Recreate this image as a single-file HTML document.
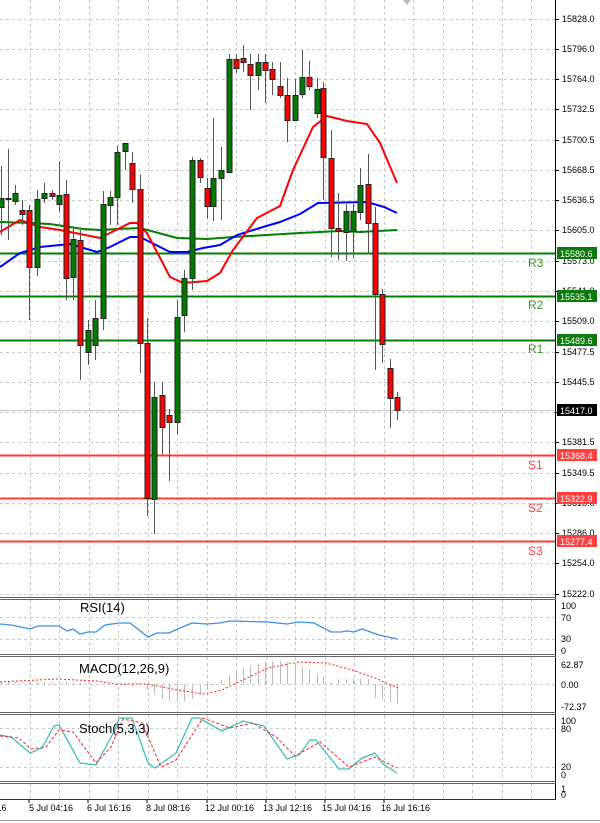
<!DOCTYPE html>
<html><head><meta charset="utf-8"><style>
html,body{margin:0;padding:0;background:#fff;}
svg{display:block;font-family:"Liberation Sans",sans-serif;}
</style></head><body>
<svg id="s" width="600" height="823" viewBox="0 0 600 823" xmlns="http://www.w3.org/2000/svg">
<rect width="600" height="823" fill="#fff"/>
<g id="grid"></g>
<g id="levels">
<line x1="0" y1="253.5" x2="556" y2="253.5" stroke="#008000" stroke-width="2"/>
<line x1="0" y1="296.5" x2="556" y2="296.5" stroke="#008000" stroke-width="2"/>
<line x1="0" y1="340.5" x2="556" y2="340.5" stroke="#008000" stroke-width="2"/>
<line x1="0" y1="410.5" x2="556" y2="410.5" stroke="#c8c8c8" stroke-width="1"/>
<line x1="0" y1="455.5" x2="556" y2="455.5" stroke="#ff3b30" stroke-width="2"/>
<line x1="0" y1="498.5" x2="556" y2="498.5" stroke="#ff3b30" stroke-width="2"/>
<line x1="0" y1="541.5" x2="556" y2="541.5" stroke="#ff3b30" stroke-width="2"/>
</g>
<g id="ma" fill="none" stroke-width="2">
<polyline stroke="#008000" points="0,222 30,223 50,224 83,229 100,230 117,229 140,228 177,238 207,239 233,237 300,233 340,231 360,232 397,230"/>
<polyline stroke="#0000ff" points="0,267 20,253 40,247 70,244 80,247 97,252 110,247 130,237 140,237 170,252 187,252 203,248 220,245 237,235 263,227 280,222 300,214 318,203 367,202 384,207 397,213"/>
<polyline stroke="#ff0000" points="0,232 20,220 40,227 60,230 100,238 130,223 137,223 147,233 170,277 183,283 207,281 220,273 233,250 257,218 280,206 293,170 313,127 327,116 347,121 367,124 380,143 397,183"/>
</g>
<g id="candles"></g>
<g font-size="12" fill="#2e8b57">
<text x="528" y="267" fill="#3a9a20">R3</text>
<text x="528" y="309" fill="#3a9a20">R2</text>
<text x="528" y="353" fill="#3a9a20">R1</text>
<text x="528" y="469" fill="#ff4040">S1</text>
<text x="528" y="512" fill="#ff4040">S2</text>
<text x="528" y="555" fill="#ff4040">S3</text>
</g>
<polygon points="403,0 411,0 407,5" fill="#bbb"/>
<!-- axis -->
<line x1="555.5" y1="0" x2="555.5" y2="800" stroke="#000" stroke-width="1"/>
<g font-size="9" fill="#000">
<text x="562" y="22">15828.0</text>
<text x="562" y="52">15796.0</text>
<text x="562" y="82">15764.0</text>
<text x="562" y="112">15732.5</text>
<text x="562" y="143">15700.5</text>
<text x="562" y="173">15668.5</text>
<text x="562" y="203">15636.5</text>
<text x="562" y="233">15605.0</text>
<text x="562" y="264">15573.0</text>
<text x="562" y="294">15541.0</text>
<text x="562" y="324">15509.0</text>
<text x="562" y="355">15477.5</text>
<text x="562" y="385">15445.5</text>
<text x="562" y="415">15413.5</text>
<text x="562" y="445">15381.5</text>
<text x="562" y="476">15349.5</text>
<text x="562" y="506">15318.0</text>
<text x="562" y="536">15286.0</text>
<text x="562" y="566">15254.0</text>
<text x="562" y="597">15222.0</text>
</g>
<g font-size="9" fill="#fff">
<rect x="557" y="247" width="40" height="12" fill="#0a7a0a"/><text x="560" y="257">15580.6</text>
<rect x="557" y="290" width="40" height="12" fill="#0a7a0a"/><text x="560" y="300">15535.1</text>
<rect x="557" y="334" width="40" height="12" fill="#0a7a0a"/><text x="560" y="344">15489.6</text>
<rect x="557" y="404" width="40" height="12" fill="#000"/><text x="560" y="414">15417.0</text>
<rect x="557" y="449" width="40" height="12" fill="#ff4040"/><text x="560" y="459">15368.4</text>
<rect x="557" y="492" width="40" height="12" fill="#ff4040"/><text x="560" y="502">15322.9</text>
<rect x="557" y="535" width="40" height="12" fill="#ff4040"/><text x="560" y="545">15277.4</text>
</g>
<!-- panel borders -->
<g stroke="#666" stroke-width="1" fill="none">
<line x1="0" y1="597.5" x2="556" y2="597.5"/><line x1="0" y1="599.5" x2="556" y2="599.5"/>
<line x1="0" y1="654.5" x2="556" y2="654.5"/><line x1="0" y1="656.5" x2="556" y2="656.5"/>
<line x1="0" y1="712.5" x2="556" y2="712.5"/><line x1="0" y1="714.5" x2="556" y2="714.5"/>
<line x1="0" y1="781.5" x2="556" y2="781.5"/><line x1="0" y1="783.5" x2="556" y2="783.5"/>
<line x1="0" y1="799.5" x2="556" y2="799.5" stroke="#333"/>
<line x1="0" y1="820.5" x2="600" y2="820.5" stroke="#999"/>
</g>
<!-- RSI -->
<polyline fill="none" stroke="#3c8fe8" stroke-width="1.3" points="0,624 11,625 30,629 38,626 59,626 67,631 73,629 80,634 88,632 96,632 105,625 119,623 130,623 148,637 157,633 169,633 180,628 192,623 207,624 220,623 230,621 268,622 287,624 299,622 314,623 331,632 341,632 347,631 354,632 362,629 379,635 397,639"/>
<text x="80" y="612" font-size="13" fill="#000">RSI(14)</text>
<g font-size="9" fill="#000">
<text x="561" y="609">100</text><text x="561" y="621">70</text><text x="561" y="642">30</text><text x="561" y="654">0</text>
</g>
<!-- MACD -->
<g id="hist" stroke="#bbb" stroke-width="1"></g>
<polyline fill="none" stroke="#ff2020" stroke-width="1" stroke-dasharray="2,2" points="0,682 57,679 96,681 115,684 147,684 172,689 203,694 222,690 249,677 268,668 299,662 326,663 352,670 375,678 398,688"/>
<text x="79" y="673" font-size="13" fill="#000">MACD(12,26,9)</text>
<g font-size="9" fill="#000">
<text x="561" y="668">62.87</text><text x="561" y="688">0.00</text><text x="561" y="710">-72.37</text>
</g>
<!-- Stoch -->
<polyline fill="none" stroke="#40c0b8" stroke-width="1.3" points="0,735 11,737 30,753 42,748 54,726 59,725 80,763 96,765 115,730 119,718 132,718 148,763 155,768 176,753 192,718 199,718 222,731 243,721 264,726 287,759 299,755 310,740 316,740 339,769 349,769 362,758 375,753 383,764 397,773"/>
<polyline fill="none" stroke="#ff2020" stroke-width="1" stroke-dasharray="3,2" points="0,736 19,738 31,749 46,747 59,730 73,732 96,763 111,747 123,719 142,723 161,767 176,760 203,718 230,728 253,723 276,737 295,756 320,742 349,767 375,757 397,768"/>
<text x="79" y="733" font-size="13" fill="#000">Stoch(5,3,3)</text>
<g font-size="9" fill="#000">
<text x="561" y="724">100</text><text x="561" y="732">80</text><text x="561" y="770">20</text><text x="561" y="778">0</text>
<text x="561" y="792">1</text><text x="561" y="798">0</text>
</g>
<!-- dates -->
<g font-size="9" fill="#000">
<text x="-6" y="811">:16</text>
<text x="29" y="811">5 Jul 04:16</text>
<text x="87" y="811">6 Jul 16:16</text>
<text x="146" y="811">8 Jul 08:16</text>
<text x="205" y="811">12 Jul 00:16</text>
<text x="263" y="811">13 Jul 12:16</text>
<text x="322" y="811">15 Jul 04:16</text>
<text x="381" y="811">16 Jul 16:16</text>
</g>
<g stroke="#000"><line x1="29" y1="800" x2="29" y2="803"/><line x1="88" y1="800" x2="88" y2="803"/><line x1="147" y1="800" x2="147" y2="803"/><line x1="207" y1="800" x2="207" y2="803"/><line x1="266" y1="800" x2="266" y2="803"/><line x1="325" y1="800" x2="325" y2="803"/><line x1="384" y1="800" x2="384" y2="803"/></g>
</svg>
<script>
var NS="http://www.w3.org/2000/svg";
function el(p,t,a){var e=document.createElementNS(NS,t);for(var k in a)e.setAttribute(k,a[k]);p.appendChild(e);return e;}
var g=document.getElementById("grid");
var hy=[19,49,79,109,140,170,200,230,261,291,321,352,382,412,442,473,503,533,563,594];
hy.forEach(function(y){el(g,"line",{x1:0,y1:y+.5,x2:555,y2:y+.5,stroke:"#c8c8c8","stroke-dasharray":"3,3"});
 el(g,"line",{x1:555,y1:y+.5,x2:559,y2:y+.5,stroke:"#000"});});
[617,639].forEach(function(y){el(g,"line",{x1:0,y1:y+.5,x2:555,y2:y+.5,stroke:"#c8c8c8","stroke-dasharray":"3,3"});});
[684].forEach(function(y){el(g,"line",{x1:0,y1:y+.5,x2:555,y2:y+.5,stroke:"#c8c8c8","stroke-dasharray":"3,3"});});
[728,767].forEach(function(y){el(g,"line",{x1:0,y1:y+.5,x2:555,y2:y+.5,stroke:"#c8c8c8","stroke-dasharray":"3,3"});});
for(var x=29.5;x<555;x+=29.5){var xx=Math.round(x)+.5;
 [[0,597],[600,654],[657,712],[715,781],[784,799]].forEach(function(r){el(g,"line",{x1:xx,y1:r[0],x2:xx,y2:r[1],stroke:"#c8c8c8","stroke-dasharray":"3,3"});});}
var C=[[1,198,207,166,235,'g'],[8,198,199,149,240,'g'],[15,193,201,185,205,'g'],[22,210,214,200,225,'r'],[29,210,267,205,320,'r'],[37,199,267,190,276,'g'],[44,193,198,183,203,'g'],[52,193,196,190,200,'r'],[59,195,204,161,212,'g'],[66,194,278,180,300,'r'],[73,239,277,228,300,'g'],[80,240,345,230,380,'r'],[88,330,352,320,365,'g'],[95,318,345,300,360,'g'],[103,204,318,191,330,'g'],[110,197,205,191,225,'g'],[117,152,197,146,225,'g'],[125,143,151,143,170,'g'],[132,163,189,152,203,'r'],[140,189,343,175,373,'r'],[147,343,498,318,516,'r'],[154,397,499,382,534,'g'],[162,395,427,382,455,'r'],[169,415,422,409,481,'r'],[177,317,422,300,435,'g'],[184,278,315,270,332,'g'],[192,160,278,157,290,'g'],[200,160,177,158,183,'r'],[207,188,206,178,219,'r'],[213,178,206,118,221,'g'],[221,170,178,147,220,'g'],[229,59,172,54,173,'g'],[236,59,68,54,73,'r'],[243,58,62,45,72,'r'],[250,64,75,54,110,'r'],[258,62,75,54,90,'g'],[265,62,70,54,103,'r'],[272,69,79,62,95,'r'],[280,86,95,62,98,'r'],[287,95,120,78,142,'r'],[295,95,120,79,120,'g'],[302,77,94,50,98,'g'],[309,77,86,61,90,'r'],[317,89,113,78,118,'g'],[323,88,157,82,200,'r'],[331,158,228,130,257,'r'],[338,228,231,193,260,'r'],[346,211,232,204,261,'g'],[353,211,231,204,258,'g'],[360,185,212,168,220,'g'],[368,184,223,154,253,'r'],[375,223,294,207,370,'r'],[382,294,344,289,363,'r'],[390,368,398,359,428,'r'],[397,397,410,392,420,'r']];
var cg=document.getElementById("candles");
C.forEach(function(c){el(cg,"line",{x1:c[0]+.5,y1:c[3],x2:c[0]+.5,y2:c[4],stroke:"#555"});
 el(cg,"rect",{x:c[0]-2,y:c[1]+.5,width:5,height:Math.max(1,c[2]-c[1]),fill:c[5]=='g'?'#007a00':'#ff0000',stroke:"#222","stroke-width":1});});
var h=document.getElementById("hist");
for(var i=0;i<C.length;i++){var x=C[i][0]+.5,v;
 var t=x/400;
 if(x<60)v=-2;else if(x<140)v=(x-100)/40*3;else if(x<215)v=18*Math.sin((x-140)/75*Math.PI);else if(x<335)v=-23*Math.sin((x-215)/120*Math.PI);else if(x<370)v=-5;else v=12+(x-370)*0.3;
 el(h,"line",{x1:x,y1:684,x2:x,y2:684+v});}
</script>
</body></html>
